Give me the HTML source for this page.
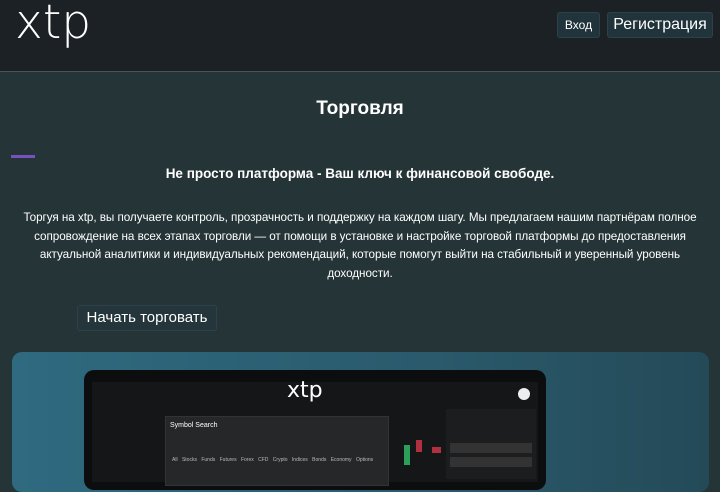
<!DOCTYPE html><html><head><meta charset="utf-8"><style>
*{margin:0;padding:0;box-sizing:border-box}
body{width:720px;height:478px;overflow:hidden;background:#253437;font-family:"Liberation Sans","DejaVu Sans",sans-serif;color:#fff;position:relative}
.hd{position:absolute;left:0;top:0;width:720px;height:72px;background:#1b2124;border-bottom:1px solid #4b5456}
.logo{position:absolute;left:15px;top:-5px;font-size:47px;font-family:"DejaVu Sans",sans-serif;font-weight:300}
.btn{position:absolute;background:#21343c;border:1px solid #2f4148;border-radius:3px;color:#fff;text-align:center}
h1{position:absolute;top:98px;width:720px;text-align:center;font-size:19px;font-weight:bold}
.bar{position:absolute;left:11px;top:155px;width:24px;height:3px;background:#7a4fc0}
h2{position:absolute;top:166px;width:720px;text-align:center;font-size:13.5px;font-weight:bold}
p{position:absolute;left:8px;top:209px;width:704px;text-align:center;font-size:11.7px;line-height:18.5px;letter-spacing:-0.05px}
.card{position:absolute;left:12px;top:352px;width:697px;height:140px;border-radius:10px;background:linear-gradient(90deg,#2f6a80,#2a5a6c 60%,#244a58)}
.lap{position:absolute;left:84px;top:370px;width:462px;height:120px;background:#0c0d0e;border-radius:10px}
.scr{position:absolute;left:92px;top:382px;width:446px;height:100px;background:#151618}
.dlg{position:absolute;left:165px;top:416px;width:224px;height:70px;background:#262729;border:1px solid #333}
</style></head><body>
<div class="hd"><div class="logo">xtp</div>
<div class="btn" style="left:557px;top:12px;width:43px;height:26px;font-size:12px;line-height:24px">Вход</div>
<div class="btn" style="left:607px;top:12px;width:106px;height:26px;font-size:16px;line-height:24px">Регистрация</div></div>
<h1>Торговля</h1><div class="bar"></div>
<h2>Не просто платформа - Ваш ключ к финансовой свободе.</h2>
<p>Торгуя на xtp, вы получаете контроль, прозрачность и поддержку на каждом шагу. Мы предлагаем нашим партнёрам полное сопровождение на всех этапах торговли — от помощи в установке и настройке торговой платформы до предоставления актуальной аналитики и индивидуальных рекомендаций, которые помогут выйти на стабильный и уверенный уровень доходности.</p>
<div class="btn" style="left:77px;top:305px;width:140px;height:26px;font-size:15px;line-height:24px;background:#24353b">Начать торговать</div>
<div class="card"></div>
<div class="lap"></div><div class="scr"></div>
<div style="position:absolute;left:287px;top:378px;font-size:22px;font-family:'DejaVu Sans',sans-serif">xtp</div>
<div style="position:absolute;left:518px;top:388px;width:12px;height:12px;border-radius:50%;background:#eee"></div>
<div style="position:absolute;left:446px;top:409px;width:90px;height:70px;background:#1c1d1f"></div>
<div style="position:absolute;left:450px;top:443px;width:82px;height:10px;background:#333"></div>
<div style="position:absolute;left:450px;top:457px;width:82px;height:10px;background:#333"></div>
<div style="position:absolute;left:404px;top:445px;width:6px;height:20px;background:#2ca05a"></div>
<div style="position:absolute;left:416px;top:440px;width:6px;height:12px;background:#b03040"></div>
<div style="position:absolute;left:432px;top:447px;width:9px;height:6px;background:#b03040"></div>
<div class="dlg"><div style="font-size:7px;padding:5px 4px">Symbol Search</div><div style="position:absolute;left:6px;top:40px;width:205px;height:9px;font-size:5px;color:#bbb;word-spacing:3px">All Stocks Funds Futures Forex CFD Crypto Indices Bonds Economy Options</div></div>
</body></html>
